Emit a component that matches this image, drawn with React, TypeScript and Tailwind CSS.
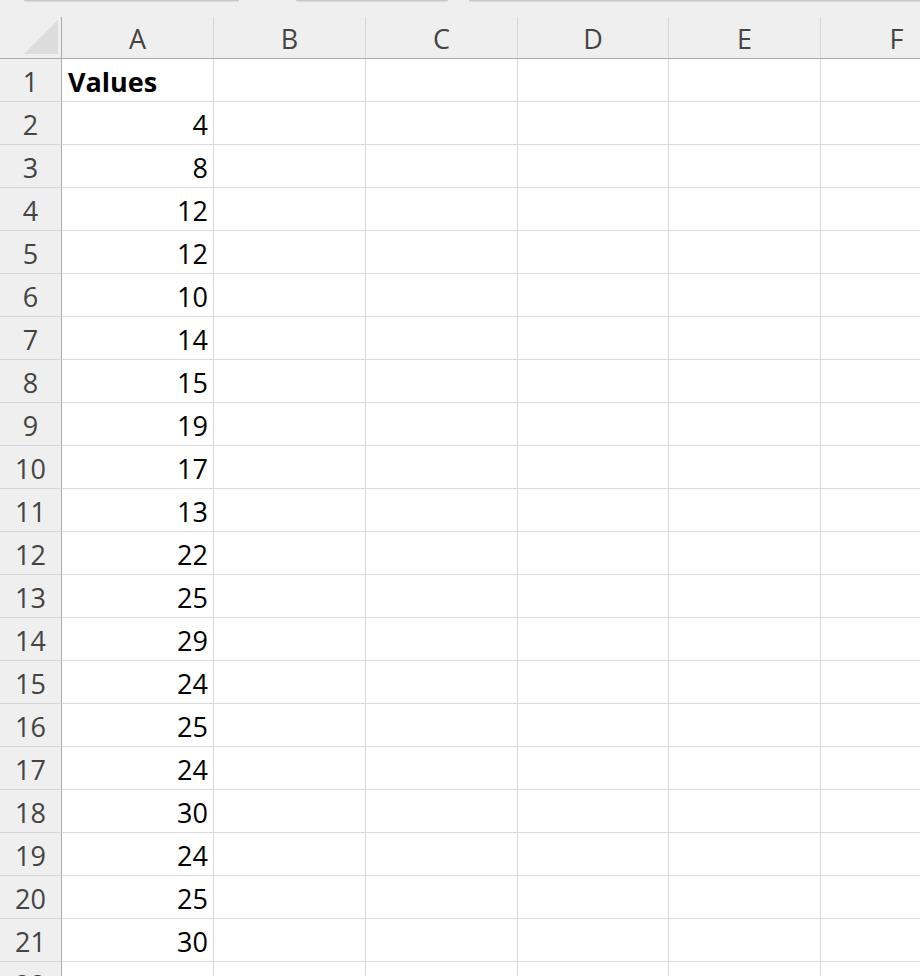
import React from "react";

const cols = [
  { l: "A", w: 152 },
  { l: "B", w: 152 },
  { l: "C", w: 152 },
  { l: "D", w: 151 },
  { l: "E", w: 152 },
  { l: "F", w: 152 },
];

const values: (string | number)[] = [
  "Values", 4, 8, 12, 12, 10, 14, 15, 19, 17, 13, 22, 25, 29, 24, 25, 24, 30, 24, 25, 30, "",
];

export default function App() {
  return (
    <div
      className="w-[920px] h-[976px] overflow-hidden bg-[#efefef] relative"
      style={{ fontFamily: '"Open Sans", "Noto Sans", sans-serif' }}
    >
      {/* top strip */}
      <div className="h-[17px] flex items-start">
        <div className="w-[24px]" />
        <div className="w-[215px] h-[2px] bg-gradient-to-b from-[#bdbdbd] to-[#e6e6e6] rounded-b-sm" />
        <div className="w-[57px]" />
        <div className="w-[152px] h-[2px] bg-gradient-to-b from-[#bdbdbd] to-[#e6e6e6] rounded-b-sm" />
        <div className="w-[21px]" />
        <div className="flex-1 h-[2px] bg-gradient-to-b from-[#bdbdbd] to-[#e6e6e6]" />
      </div>
      {/* header row */}
      <div className="flex h-[42px] border-b border-[#ababab]">
        <div className="w-[62px] shrink-0 border-r border-[#ababab] relative flex items-end justify-start">
          <svg width="62" height="41" className="absolute left-0 top-0">
            <polygon points="24,37 58,3 58,37" fill="#dcdcdc" />
          </svg>
        </div>
        {cols.map((c) => (
          <div
            key={c.l}
            className="shrink-0 border-r border-[#d6d6d6] flex items-center justify-center pt-[2px] text-[27px] text-[#444444] leading-none"
            style={{ width: c.w }}
          >
            {c.l}
          </div>
        ))}
      </div>
      {/* rows */}
      {values.map((v, i) => (
        <div key={i} className="flex h-[43px]">
          <div className="w-[62px] shrink-0 border-r border-b border-r-[#ababab] border-b-[#d6d6d6] flex items-center justify-center pt-[2px] text-[27px] text-[#444444] leading-none">
            {i + 1}
          </div>
          {cols.map((c, j) => (
            <div
              key={c.l}
              className={
                "shrink-0 bg-white border-r border-b border-[#dadada] flex items-center pt-[2px] text-[27px] text-black leading-none " +
                (j === 0 && i === 0
                  ? "justify-start pl-[6px] font-bold"
                  : "justify-end pr-[5px]")
              }
              style={{ width: c.w }}
            >
              {j === 0 ? v : ""}
            </div>
          ))}
        </div>
      ))}
    </div>
  );
}
